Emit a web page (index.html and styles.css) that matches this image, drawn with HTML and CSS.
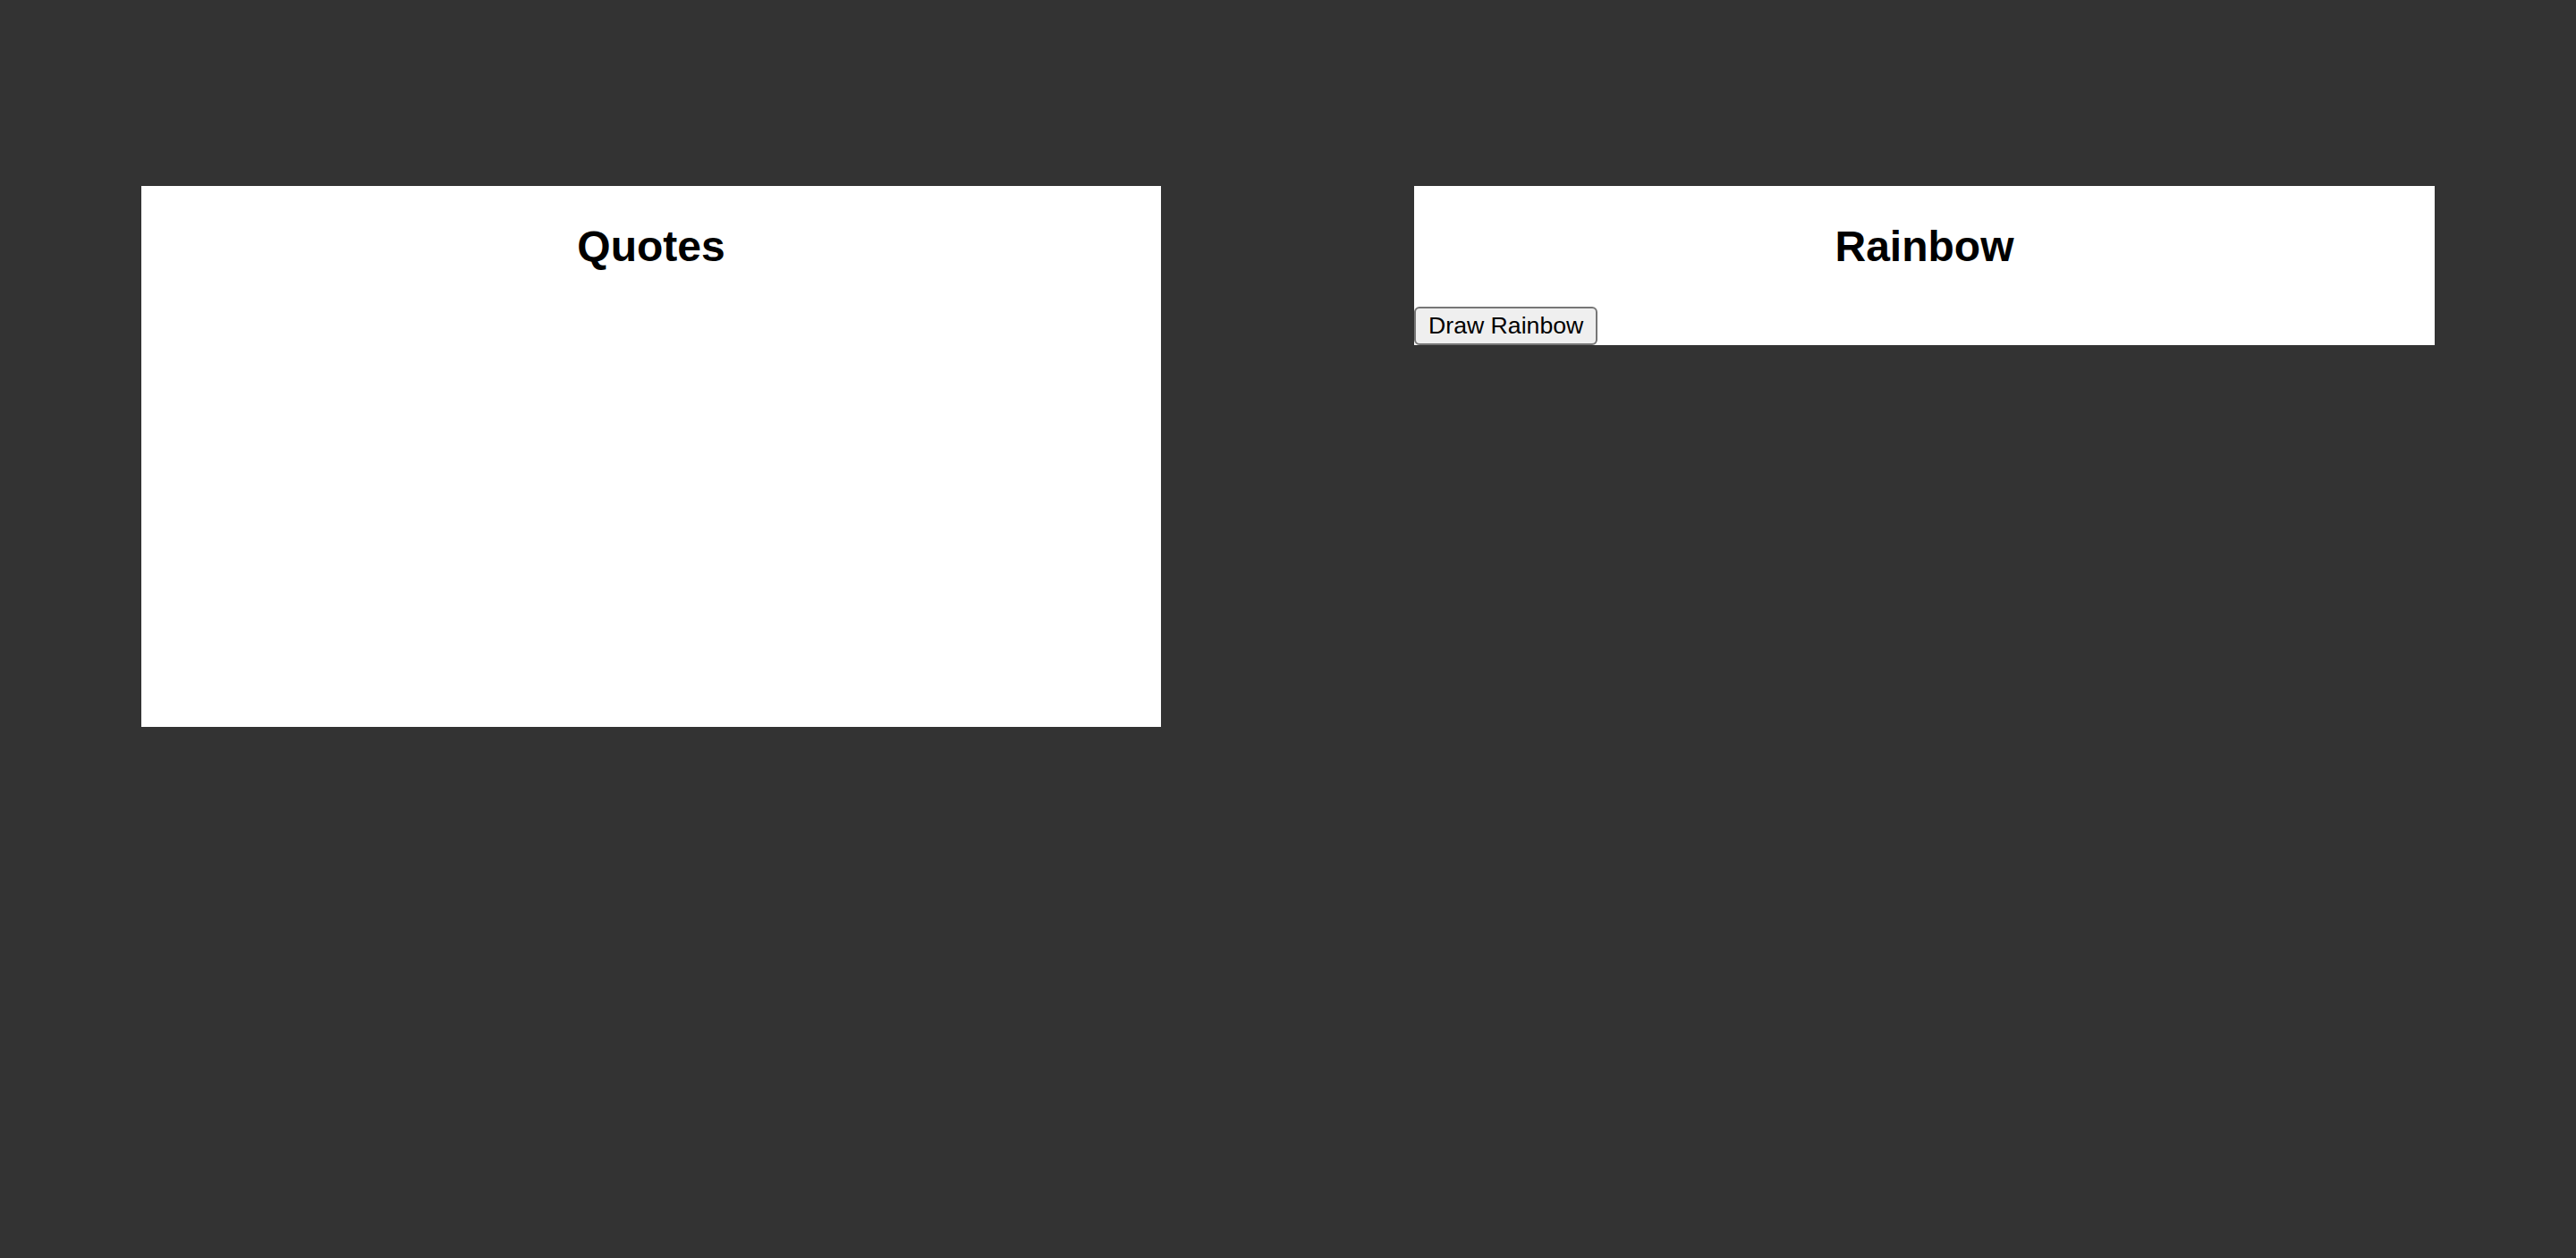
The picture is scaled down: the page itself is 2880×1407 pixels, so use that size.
FILE: index.html
```html
<!DOCTYPE html>
<html lang="en">
<head>
<meta charset="utf-8">
<title>Quotes and Rainbow</title>
<link rel="stylesheet" href="styles.css">
</head>
<body>
<main class="board">
  <section class="card card-quotes">
    <h2 class="card-title">Quotes</h2>
  </section>
  <section class="card card-rainbow">
    <h2 class="card-title">Rainbow</h2>
    <button class="draw-btn" type="button">Draw Rainbow</button>
  </section>
</main>
</body>
</html>
```
FILE: styles.css
```css
html, body {
  margin: 0;
  padding: 0;
  height: 100%;
}
body {
  background: #333333;
  font-family: "Liberation Sans", Arial, sans-serif;
  color: #000;
  overflow: hidden;
}
.board {
  display: flex;
  align-items: flex-start;
  gap: 283px;
  padding: 208px 158px 0;
}
.card {
  background: #ffffff;
  display: flex;
  flex-direction: column;
  align-items: flex-start;
}
.card-quotes {
  width: 1140px;
  height: 605px;
}
.card-rainbow {
  width: 1141px;
}
.card-title {
  align-self: stretch;
  text-align: center;
  font-size: 48px;
  font-weight: bold;
  line-height: normal;
  margin: 40px 0;
}
.draw-btn {
  font-family: "Liberation Sans", Arial, sans-serif;
  font-size: 26.67px;
  line-height: normal;
  color: #000;
  background: #efefef;
  border: 2px solid #767676;
  border-radius: 6px;
  padding: 4px 14px;
  margin: 0;
}
```
